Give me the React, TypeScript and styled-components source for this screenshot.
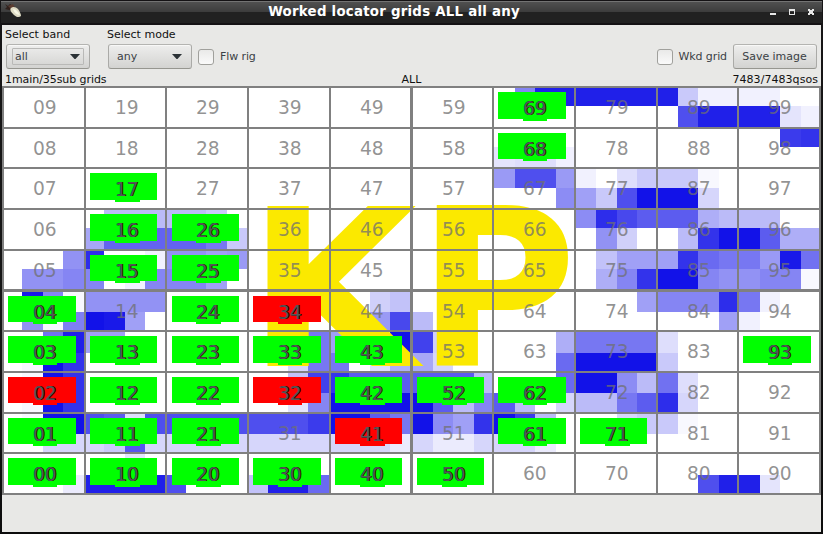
import React from "react";
import styled, { createGlobalStyle, css } from "styled-components";

const GlobalStyle = createGlobalStyle`
  *, *::before, *::after { box-sizing: border-box; }
  body { margin: 0; background: #141414; overflow: hidden; }
`;

const Window = styled.div`
  width: 823px;
  height: 534px;
  display: flex;
  flex-direction: column;
  padding: 0 2px 2px;
  background: linear-gradient(#161516, #161516 60%, #0c0c0c);
  font: 11px/13px "DejaVu Sans", sans-serif;
  color: #111;
  white-space: nowrap;
`;

const TitleBar = styled.header`
  flex: none;
  height: 25px;
  display: grid;
  grid-template-columns: 42px 1fr 77px;
  align-items: start;
  margin: 0 -1px;
  border-top: 1px solid #141214;
  background: linear-gradient(#737373 0 1px, #505050 1px, #3c3c3c 11px, #212121 11px, #212121 22px, #141214 22px);
`;

const AppIcon = styled.svg`
  width: 18px;
  height: 17px;
  margin: 1px 0 0 3px;
`;

const Title = styled.h1`
  margin: 2px 0 0;
  font-size: 13.33px;
  line-height: 17px;
  font-weight: bold;
  letter-spacing: 0.25px;
  text-align: center;
  color: #fff;
`;

const WindowButtons = styled.svg`
  justify-self: end;
  width: 46px;
  height: 8px;
  margin: 7px 7px 0 0;
`;

const Content = styled.main`
  flex: none;
  height: 507px;
  background: #e8e8e6;
`;

const Toolbar = styled.div`
  height: 47px;
  display: flex;
  padding: 3px 4px 0 3px;
`;

const Field = styled.div<{ $width: number }>`
  width: ${(p) => p.$width}px;
  display: flex;
  flex-direction: column;
`;

const Label = styled.span`
  height: 16px;
`;

const buttonFace = css`
  height: 25px;
  border: 1px solid #a9a9a6;
  border-color: #b4b4b1 #aaaaa7 #969690;
  border-radius: 3px;
  background: linear-gradient(#eeeeed, #d3d3d1);
  box-shadow: inset 0 1px 0 #f8f8f7;
  font: 11px/13px "DejaVu Sans", sans-serif;
  color: #3b4145;
`;

const Select = styled.button`
  ${buttonFace}
  width: 84px;
  margin-left: 1px;
  padding: 3px 5px 3px 5px;
`;

const SelectInner = styled.span<{ $focused?: boolean }>`
  height: 17px;
  display: flex;
  align-items: center;
  justify-content: space-between;
  padding: 0 3px 1px 2px;
  border: 1px solid ${(p) => (p.$focused ? "#b9b9b7" : "transparent")};
  border-radius: 1px;
`;

const Arrow = styled.svg`
  width: 10px;
  height: 5px;
  margin-top: 1px;
`;

const CheckLabel = styled.label`
  height: 25px;
  display: flex;
  align-items: center;
  gap: 6px;
  margin-top: 16px;
  letter-spacing: -0.1px;
  color: #3b4145;
`;

const CheckBox = styled.span`
  width: 16px;
  height: 16px;
  border: 1px solid #a0a09c;
  border-radius: 3px;
  background: linear-gradient(#e9e9e8, #fafafa);
`;

const Spacer = styled.div`
  flex: 1;
`;

const SaveButton = styled.button`
  ${buttonFace}
  width: 84px;
  margin: 16px 0 0 6px;
  padding: 0 1px 1px 0;
  letter-spacing: -0.05px;
`;

const StatusRow = styled.div`
  height: 14px;
  display: grid;
  grid-template-columns: 1fr auto 1fr;
  padding: 1px 3px 0;
  line-height: 13px;
`;

const StatusText = styled.span`
  &:first-child { letter-spacing: -0.07px; }
  &:last-child { text-align: right; letter-spacing: 0.05px; }
`;

const Board = styled.section`
  width: 819px;
  height: 409px;
  display: grid;
  background: #fff;
  overflow: hidden;
  border: solid #808080;
  border-width: 0 2px 2px 0;
  > * { grid-area: 1 / 1; }
`;

const heatX = [2, 22, 43, 63, 84, 104, 125, 145, 165, 186, 206, 227, 247, 268, 288, 308, 329, 349, 370, 390, 411, 433, 453, 474, 493, 515, 535, 556, 575, 596, 617, 637, 657, 678, 698, 719, 738, 760, 780, 801, 819];
const heatY = [86, 106, 128, 147, 168, 188, 209, 228, 250, 269, 290, 312, 331, 353, 372, 393, 413, 434, 453, 475, 493];
const colX = [2, 84, 165, 247, 329, 410, 492, 574, 656, 737, 819];
const rowY = [86, 127, 167, 208, 249, 289, 330, 371, 412, 452, 493];

const tracks = (edges: number[]) =>
  edges.slice(1).map((e, i) => `${e - edges[i]}px`).join(" ");

const HeatLayer = styled.div`
  display: grid;
  grid-template-columns: ${tracks(heatX)};
  grid-template-rows: ${tracks(heatY)};
`;

const HeatCell = styled.i<{ $level: number }>`
  background: rgb(18 18 232 / ${(p) => p.$level});
`;

const FieldName = styled.div`
  width: 340px;
  margin: 78px 0 0 245.5px;
  height: 254px;
  font-size: 218.5px;
  line-height: 254px;
  font-weight: bold;
  color: #fbe900;
`;

const CellLayer = styled.div`
  display: grid;
  grid-template-columns: ${tracks(colX)};
  grid-template-rows: ${tracks(rowY)};
`;

const Cell = styled.div<{ $left: number; $top: number }>`
  display: grid;
  align-items: start;
  justify-items: start;
  border: solid #808080;
  border-width: ${(p) => p.$top}px 0 0 ${(p) => p.$left}px;
  > * { grid-area: 1 / 1; }
`;

type Mark = "green" | "red";
const markColor = { green: "#00ff00", red: "#ff0000" };

const Tag = styled.div<{ $mark: Mark; $w: number; $h: number; $x: number }>`
  width: ${(p) => p.$w}px;
  height: ${(p) => p.$h}px;
  margin: 4px 0 0 ${(p) => p.$x}px;
  background: ${(p) => markColor[p.$mark]};
`;

const Number = styled.span`
  margin: 3px 0 0 29px;
  font-size: 18.67px;
  line-height: 33px;
  color: rgb(112 112 112 / 0.76);
`;

const TagNumber = styled(Number)<{ $mark: Mark; $h: number; $w: number }>`
  width: ${(p) => p.$w}px;
  height: ${(p) => p.$h + 2}px;
  margin-top: 4px;
  line-height: 33px;
  letter-spacing: -0.2px;
  background: ${(p) => markColor[p.$mark]};
  color: #565656;
  text-shadow: 1px 0 rgb(0 0 0 / 0.75), 0.5px 0 rgb(0 0 0 / 0.6), -0.5px 0 rgb(0 0 0 / 0.4);
`;

/* Activity density per sub-square, base 36: 0 = none, z = highest. */
const heat = [
  "0000 0000 0000 0000 0000 0000 0ixx xxxx x822 2200",
  "0000 0000 0000 0000 0000 0000 0000 0000 0qxx xx42",
  "0000 0000 0000 0000 0000 0000 0000 0000 0000 00tu",
  "0000 0000 0000 0000 0000 0000 4552 0000 0000 0000",
  "0000 0000 0000 0000 0000 0000 fqqf 2058 8810 0000",
  "0000 0000 0000 0000 0000 0000 000h e8qz zz60 0000",
  "0000 0aaa aa80 0000 0000 0000 0000 hvro ooca aa00",
  "0000 dnnn nnk8 0000 0000 0000 0000 0g70 0auz zocc",
  "000g v002 ggef 0000 0000 0000 0000 09ee eumk kfyl",
  "0ggi i02i iie0 0000 0000 0000 0000 0ciu zzig gii1",
  "0yi1 gggg 0000 0000 0079 0000 0000 000e iiiv k200",
  "0g1j zye0 0000 0000 00fr a000 0000 0000 000e 2000",
  "00lx ee00 0000 000k e00z s700 000c kkkk 5000 0000",
  "01zu 0000 0000 006k k05c d600 000m zzzz 8000 0000",
  "01zu 0000 0000 009s uooo oooa 000m zzha l500 0000",
  "01zu 0000 0000 004i zzzz zoai oa06 aako v600 0000",
  "01zz qo5q qqqq qqqt zzok zheu zta0 0068 8100 0000",
  "0066 68p6 6666 6666 6663 6336 6630 0000 0000 0000",
  "0000 0040 0000 0000 0000 0000 0000 0000 0000 0000",
  "0003 xxxx q000 9xxm 0000 0000 0000 0000 00qx x400",
].map((r) => r.replace(/ /g, "").split("").map((c) => parseInt(c, 36) / 35));

const green = new Set("69 68 17 16 26 15 25 04 24 03 13 23 33 43 93 12 22 42 52 62 01 11 21 61 71 00 10 20 30 40 50".split(" "));
const red = new Set(["34", "02", "32", "41"]);

const tagW = [68, 67, 67, 68, 67, 67, 68, 67, 67, 68];
const tagH = [27, 26, 27, 27, 26, 26, 27, 26, 26, 27];

function GridCell({ col, row }: { col: number; row: number }) {
  const id = `${col}${9 - row}`;
  const mark: Mark | null = green.has(id) ? "green" : red.has(id) ? "red" : null;
  return (
    <Cell $left={col === 5 ? 3 : 2} $top={row === 5 ? 3 : 2}>
      {mark ? (
        <>
          <Tag $mark={mark} $w={tagW[col]} $h={tagH[row]} $x={col === 2 ? 5 : 4} />
          <TagNumber $mark={mark} $h={tagH[row]} $w={tagW[col] === 68 ? 24 : 25}>{id}</TagNumber>
        </>
      ) : (
        <Number>{id}</Number>
      )}
    </Cell>
  );
}

function DropDown({ value, focused }: { value: string; focused?: boolean }) {
  return (
    <Select type="button">
      <SelectInner $focused={focused}>
        {value}
        <Arrow viewBox="0 0 10 5"><path d="M0 0h10L5.5 5h-1z" fill="#2b3236" /></Arrow>
      </SelectInner>
    </Select>
  );
}

export default function App() {
  return (
    <>
      <GlobalStyle />
      <Window>
        <TitleBar>
          <AppIcon viewBox="0 0 18 17">
            <path d="M1 2l3 2 2-2 4 3-1 4-4-1-4-1 2-2z" fill="#30201c" />
            <path d="M4 4l5-2 2 4-3 2z" fill="#5b3c30" />
            <path d="M7 6c2-2 5-1 7 1 2 3 3 5 3 7-2 2-5 1-7-1S5 8 7 6z" fill="#dedbc4" />
            <path d="M9 7c3 0 5 3 7 6-4 0-6-3-7-6z" fill="#f7f6e5" />
          </AppIcon>
          <Title>Worked locator grids ALL all any</Title>
          <WindowButtons viewBox="0 0 46 8" shapeRendering="crispEdges">
            <path d="M1 5h6v2H1z" fill="#e6e6e6" />
            <path d="M20 1h6v6h-6zM21 3v3h4V3z" fill="#e6e6e6" fillRule="evenodd" />
            <path d="M39 1h2v1h2V1h2v2h-1v2h1v2h-2V6h-2v1h-2V5h1V3h-1z" fill="#e6e6e6" />
          </WindowButtons>
        </TitleBar>
        <Content>
          <Toolbar>
            <Field $width={102}>
              <Label>Select band</Label>
              <DropDown value="all" focused />
            </Field>
            <Field $width={91}>
              <Label>Select mode</Label>
              <DropDown value="any" />
            </Field>
            <CheckLabel><CheckBox />Flw rig</CheckLabel>
            <Spacer />
            <CheckLabel><CheckBox />Wkd grid</CheckLabel>
            <SaveButton type="button">Save image</SaveButton>
          </Toolbar>
          <StatusRow>
            <StatusText>1main/35sub grids</StatusText>
            <StatusText>ALL</StatusText>
            <StatusText>7483/7483qsos</StatusText>
          </StatusRow>
          <Board>
            <HeatLayer>
              {heat.flatMap((r, y) => r.map((v, x) => <HeatCell key={`${x}-${y}`} $level={v} />))}
            </HeatLayer>
            <FieldName>KP</FieldName>
            <CellLayer>
              {Array.from({ length: 100 }, (_, i) => (
                <GridCell key={i} col={i % 10} row={Math.floor(i / 10)} />
              ))}
            </CellLayer>
          </Board>
        </Content>
      </Window>
    </>
  );
}
